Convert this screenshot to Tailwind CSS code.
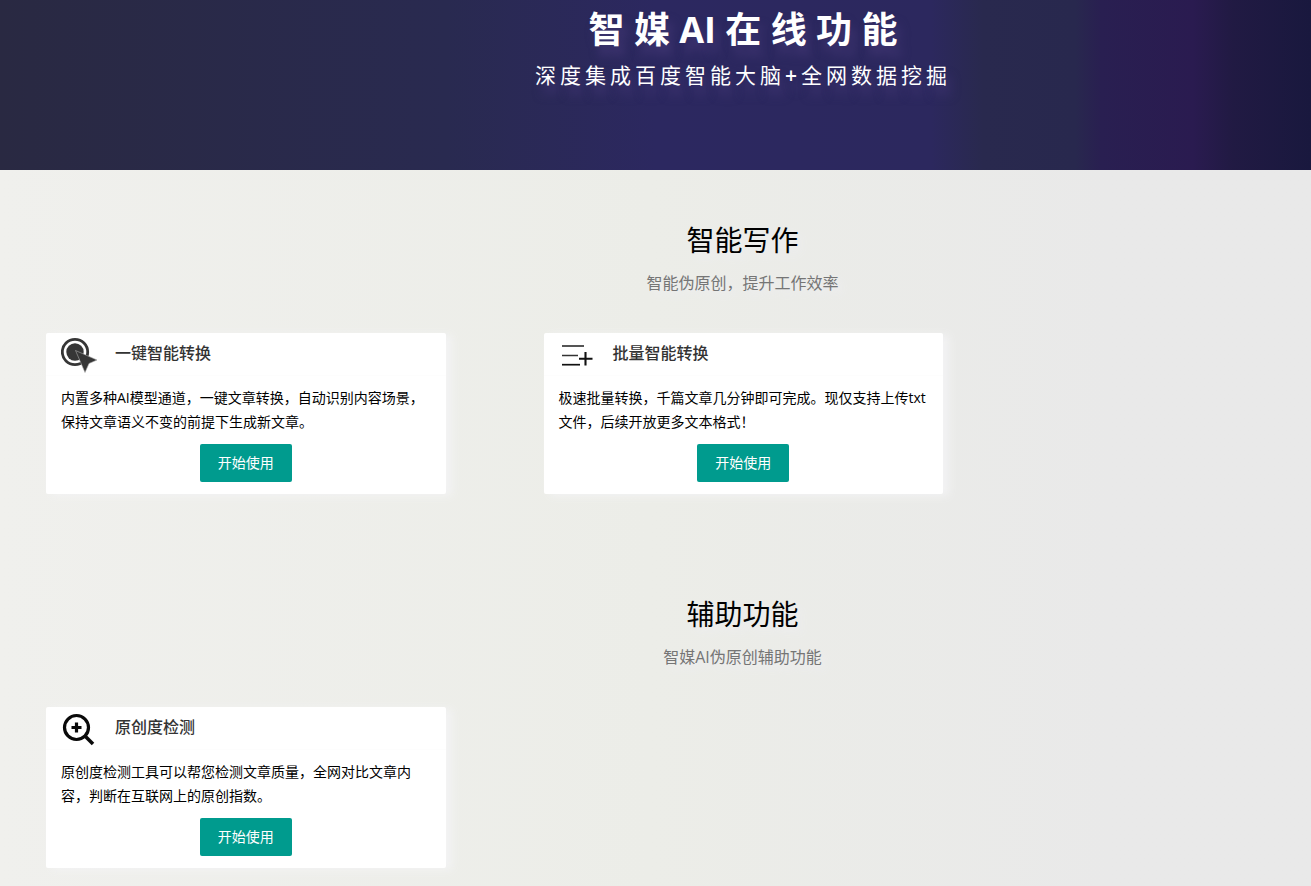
<!DOCTYPE html>
<html lang="zh-CN">
<head>
<meta charset="utf-8">
<title>智媒AI在线功能</title>
<script src="https://cdn.jsdelivr.net/npm/@tailwindcss/browser@4"></script>
</head>
<body class="font-['Open_Sans','Noto_Sans_CJK_SC',sans-serif] text-sm text-black">
<div class="min-h-screen bg-linear-to-r from-[#f0f0ed] via-[#ecede8] via-50% to-[#e9e9e9] to-85%">
  <header class="flex h-[170px] flex-col items-center bg-[linear-gradient(to_right,#292942_0%,#292a50_34%,#2c2860_50%,#2c285e_71%,#29294e_75%,#28284e_82%,#291f51_84%,#2a1b50_91%,#211a43_94%,#19183e_100%)] pl-[175px] text-center text-white">
    <h1 class="mt-[5px] text-[36px] leading-[50px] font-bold [text-shadow:5px_10px_10px_#3e3470]">智 媒 AI 在 线 功 能</h1>
    <p class="mt-1 text-[21px] leading-8 tracking-[4px] [text-shadow:5px_10px_10px_#3e3470]">深度集成百度智能大脑<span class="font-semibold">+</span>全网数据挖掘</p>
  </header>
  <main>
    <section class="pt-[50px]">
      <div class="pl-[174px] text-center [text-shadow:5px_5px_8px_#eeeef2]">
        <h2 class="text-[28px] leading-10">智能写作</h2>
        <p class="mt-[11px] text-base leading-6 text-[#757575]">智能伪原创，提升工作效率</p>
      </div>
      <div class="mt-[38px] grid grid-cols-2 gap-x-[98px] pr-[368px] pl-[46px]">
        <article class="rounded-xs bg-white shadow-[6px_2px_8px_#f3f3f4]">
          <div class="flex h-[43px] gap-4 border-b border-[#fdfdfd] px-[15px] pt-1">
            <svg class="h-9 w-[38px]" viewBox="0 0 38 36" fill="none" aria-hidden="true">
              <circle cx="14" cy="15" r="12.7" stroke="#363636" stroke-width="2.800"/>
              <circle cx="14" cy="15" r="8.7" fill="#363636"/>
              <path d="M14.500 13.500 36 23 28 26.500 24 35.500Z" fill="#363636" stroke="#aaa" stroke-width=".6"/>
            </svg>
            <h3 class="pt-1 text-base leading-6 font-medium text-[#333]">一键智能转换</h3>
          </div>
          <div class="px-[15px] pt-[10px] pb-3">
            <p class="leading-6">内置多种AI模型通道，一键文章转换，自动识别内容场景，保持文章语义不变的前提下生成新文章。</p>
            <button type="button" class="mx-auto mt-[10px] block h-[38px] rounded-xs bg-[#009b8e] px-[18px] text-white">开始使用</button>
          </div>
        </article>
        <article class="rounded-xs bg-white shadow-[6px_2px_8px_#f3f3f4]">
          <div class="flex h-[43px] gap-4 border-b border-[#fdfdfd] px-[15px] pt-1">
            <svg class="h-9 w-[38px]" viewBox="0 0 38 36" fill="none" aria-hidden="true">
              <path d="M3 9h22" stroke="#555" stroke-width="2"/>
              <path d="M3 18.500h16" stroke="#333" stroke-width="1.500"/>
              <path d="M3 27.700h18" stroke="#111" stroke-width="1.700"/>
              <path d="M20 21.800h13.500M26.500 15v13.500" stroke="#111" stroke-width="2.100"/>
            </svg>
            <h3 class="pt-1 text-base leading-6 font-medium text-[#333]">批量智能转换</h3>
          </div>
          <div class="px-[15px] pt-[10px] pb-3">
            <p class="leading-6">极速批量转换，千篇文章几分钟即可完成。现仅支持上传txt文件，后续开放更多文本格式！</p>
            <button type="button" class="mx-auto mt-[10px] block h-[38px] rounded-xs bg-[#009b8e] px-[18px] text-white">开始使用</button>
          </div>
        </article>
      </div>
    </section>
    <section class="pt-[100px] pb-[18px]">
      <div class="pl-[174px] text-center [text-shadow:5px_5px_8px_#eeeef2]">
        <h2 class="text-[28px] leading-10">辅助功能</h2>
        <p class="mt-[11px] text-base leading-6 text-[#757575]">智媒AI伪原创辅助功能</p>
      </div>
      <div class="mt-[38px] grid grid-cols-2 gap-x-[98px] pr-[368px] pl-[46px]">
        <article class="rounded-xs bg-white shadow-[6px_2px_8px_#f3f3f4]">
          <div class="flex h-[43px] gap-4 border-b border-[#fdfdfd] px-[15px] pt-1">
            <svg class="h-9 w-[38px]" viewBox="0 0 38 36" fill="none" stroke="#0a0a0a" aria-hidden="true">
              <circle cx="15.500" cy="16.500" r="12" stroke-width="3.200"/>
              <path d="M24 25l8 8" stroke-width="3.600"/>
              <path d="M10.500 16.500h10M15.500 11.500v10" stroke-width="3.200"/>
            </svg>
            <h3 class="pt-1 text-base leading-6 font-medium text-[#333]">原创度检测</h3>
          </div>
          <div class="px-[15px] pt-[10px] pb-3">
            <p class="leading-6">原创度检测工具可以帮您检测文章质量，全网对比文章内容，判断在互联网上的原创指数。</p>
            <button type="button" class="mx-auto mt-[10px] block h-[38px] rounded-xs bg-[#009b8e] px-[18px] text-white">开始使用</button>
          </div>
        </article>
      </div>
    </section>
  </main>
</div>
</body>
</html>
